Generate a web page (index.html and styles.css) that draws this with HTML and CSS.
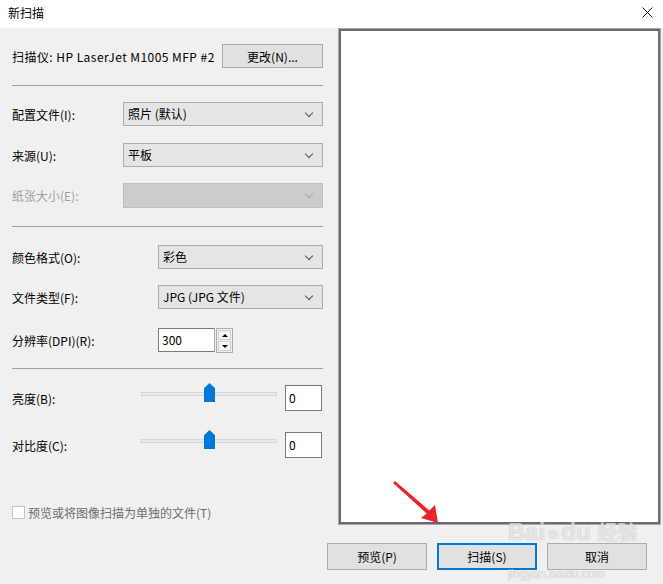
FILE: index.html
```html
<!DOCTYPE html>
<html lang="zh-CN">
<head>
    <meta charset="UTF-8">
    <title>新扫描</title>
    <link rel="stylesheet" href="styles.css">
</head>
<body>
    <div class="window">
        <div class="titlebar">
            <span class="title">新扫描</span>
            <svg class="close" width="11" height="11" viewBox="0 0 11 11">
                <path d="M0.5 0.5 L10.5 10.5 M10.5 0.5 L0.5 10.5" stroke="#111" stroke-width="1" fill="none"/>
            </svg>
        </div>

        <div class="main">
            <div class="settings">
                <div class="row scanner-row">
                    <span class="scanner-name">扫描仪: HP LaserJet M1005 MFP #2</span>
                    <button class="btn change-btn">更改(N)...</button>
                </div>
                <div class="separator sep1"></div>

                <div class="row field mt16">
                    <label class="label-a">配置文件(I):</label>
                    <div class="select select-a">照片 (默认)</div>
                </div>
                <div class="row field mt17">
                    <label class="label-a">来源(U):</label>
                    <div class="select select-a">平板</div>
                </div>
                <div class="row field mt16">
                    <label class="label-a disabled">纸张大小(E):</label>
                    <div class="select select-a off"></div>
                </div>
                <div class="separator sep2"></div>

                <div class="row field mt18">
                    <label class="label-b">颜色格式(O):</label>
                    <div class="select select-b">彩色</div>
                </div>
                <div class="row field mt16">
                    <label class="label-b">文件类型(F):</label>
                    <div class="select select-b">JPG (JPG 文件)</div>
                </div>
                <div class="row field mt19">
                    <label class="label-b">分辨率(DPI)(R):</label>
                    <div class="textbox dpi">300</div>
                    <div class="spinner">
                        <div class="spin up"></div>
                        <div class="spin down"></div>
                    </div>
                </div>
                <div class="separator sep3"></div>

                <div class="row slider-row mt16">
                    <label class="label-c">亮度(B):</label>
                    <div class="slider">
                        <div class="track"></div>
                        <div class="thumb"></div>
                    </div>
                    <div class="textbox value">0</div>
                </div>
                <div class="row slider-row mt21">
                    <label class="label-c">对比度(C):</label>
                    <div class="slider">
                        <div class="track"></div>
                        <div class="thumb"></div>
                    </div>
                    <div class="textbox value">0</div>
                </div>

                <div class="check-row">
                    <span class="checkbox"></span>
                    <span>预览或将图像扫描为单独的文件(T)</span>
                </div>
            </div>
            <div class="preview"></div>
        </div>

        <div class="footer">
            <button class="btn">预览(P)</button>
            <button class="btn default">扫描(S)</button>
            <button class="btn">取消</button>
        </div>

        <!-- flèche rouge ajoutée sur la capture -->
        <svg class="arrow" width="663" height="584" viewBox="0 0 663 584">
            <polygon points="395,481 429.3,510.5 435,505 438,523 421,518 426.7,513.5 393,483" fill="#e8262a"/>
        </svg>

        <div class="watermark">
            <div class="wm-logo">Bai<span class="paw">&#9679;</span>du <span class="wm-cn">经验</span></div>
            <div class="wm-url">jingyan.baidu.com</div>
        </div>
    </div>
</body>
</html>
```

FILE: styles.css
```css
body {
    margin: 0;
    padding: 0;
    background: #f0f0f0;
    font-family: "Noto Sans CJK SC", "Noto Sans", sans-serif;
    font-size: 12px;
    color: #000;
}
.window {
    position: relative;
    width: 663px;
    height: 584px;
    overflow: hidden;
    background: #f0f0f0;
}
.titlebar {
    height: 28px;
    background: #fff;
    display: flex;
    align-items: center;
    justify-content: space-between;
    padding: 0 10px 0 8px;
    box-sizing: border-box;
}
.title {
    font-size: 12px;
    margin-top: -3px;
}
.close {
    margin-top: -4px;
}
.main {
    display: flex;
    height: 497px;
}
.settings {
    width: 338px;
    padding: 16px 15px 0 12px;
    box-sizing: border-box;
}
.row {
    display: flex;
    align-items: center;
    height: 24px;
}
.scanner-row {
    justify-content: space-between;
}
.scanner-name {
    letter-spacing: 0.45px;
}
.mt16 { margin-top: 16px; }
.mt17 { margin-top: 17px; }
.mt18 { margin-top: 18px; }
.mt19 { margin-top: 19px; }
.mt21 { margin-top: 21px; }
.separator {
    height: 1px;
    background: #a0a0a0;
}
.sep1 { margin-top: 17px; }
.sep2 { margin-top: 19px; }
.sep3 { margin-top: 16px; }
.label-a {
    width: 111px;
}
.label-b {
    width: 146px;
}
.label-c {
    width: 129px;
}
.disabled {
    color: #a0a0a0;
}
.select {
    position: relative;
    height: 24px;
    box-sizing: border-box;
    background: #e5e5e5;
    border: 1px solid #adadad;
    padding-left: 4px;
    line-height: 22px;
}
.select::after {
    content: "";
    position: absolute;
    right: 10px;
    top: 7px;
    width: 5px;
    height: 5px;
    border-right: 1px solid #555;
    border-bottom: 1px solid #555;
    transform: rotate(45deg);
}
.select-a {
    width: 200px;
}
.select-b {
    width: 165px;
}
.select.off {
    background: #cccccc;
    border-color: #bfbfbf;
    height: 25px;
}
.select.off::after {
    border-color: #a8a8a8;
}
.textbox {
    background: #fff;
    border: 1px solid #7a7a7a;
    box-sizing: border-box;
    padding-left: 3px;
    line-height: 22px;
}
.dpi {
    width: 57px;
    height: 24px;
    border-right-color: #adadad;
}
.spinner {
    width: 17px;
    height: 25px;
    margin-left: 1px;
    border: 1px solid #adadad;
    box-sizing: border-box;
    display: flex;
    flex-direction: column;
    gap: 1px;
    padding: 1px;
}
.spin {
    flex: 1;
    background: #f4f4f4;
    border: 1px solid #d0d0d0;
    position: relative;
}
.spin::after {
    content: "";
    position: absolute;
    left: 3px;
    top: 3px;
    border-left: 3px solid transparent;
    border-right: 3px solid transparent;
}
.up::after {
    border-bottom: 3px solid #000;
}
.down::after {
    border-top: 3px solid #000;
}
.slider-row {
    height: 26px;
}
.slider {
    position: relative;
    width: 136px;
    height: 26px;
}
.track {
    position: absolute;
    left: 0;
    top: 7px;
    width: 136px;
    height: 4px;
    box-sizing: border-box;
    background: #e7eaea;
    border: 1px solid #d6d6d6;
}
.thumb {
    position: absolute;
    left: 63px;
    top: -2px;
    width: 11px;
    height: 19px;
    background: #0078d7;
    clip-path: polygon(50% 0, 100% 28%, 100% 100%, 0 100%, 0 28%);
}
.value {
    width: 37px;
    height: 26px;
    margin-left: 8px;
    line-height: 24px;
}
.check-row {
    display: flex;
    align-items: center;
    margin-top: 47px;
    color: #6d6d6d;
    height: 14px;
}
.checkbox {
    width: 13px;
    height: 13px;
    box-sizing: border-box;
    background: #fff;
    border: 1px solid #c4c4c4;
    margin-right: 3px;
}
.preview {
    width: 323px;
    height: 497px;
    box-sizing: border-box;
    background: #fff;
    border: 1px solid #a8a8a8;
    box-shadow: inset 0 0 0 2px #6b6b6b;
}
.footer {
    display: flex;
    justify-content: flex-end;
    gap: 10px;
    margin-top: 18px;
    padding-right: 16px;
}
.btn {
    font-family: "Noto Sans CJK SC", "Noto Sans", sans-serif;
    font-size: 12px;
    color: #000;
    background: #e1e1e1;
    border: 1px solid #adadad;
    width: 100px;
    height: 27px;
    padding: 0;
    box-sizing: border-box;
}
.change-btn {
    width: 101px;
    height: 24px;
}
.btn.default {
    border: 2px solid #0078d7;
}
.arrow {
    position: absolute;
    left: 0;
    top: 0;
    pointer-events: none;
}
.watermark {
    position: absolute;
    left: 508px;
    top: 518px;
    color: rgba(255, 255, 255, 0.7);
    text-shadow: 0 0 1px rgba(0, 0, 0, 0.3);
    font-family: "Liberation Sans", sans-serif;
    pointer-events: none;
}
.wm-logo {
    font-size: 24px;
    font-weight: bold;
    line-height: 28px;
}
.paw {
    font-size: 20px;
    margin: 0 2px;
}
.wm-cn {
    font-family: "Noto Sans CJK SC", sans-serif;
    font-size: 20px;
}
.wm-url {
    font-size: 12px;
    line-height: 13px;
    margin-top: 21px;
}
```
